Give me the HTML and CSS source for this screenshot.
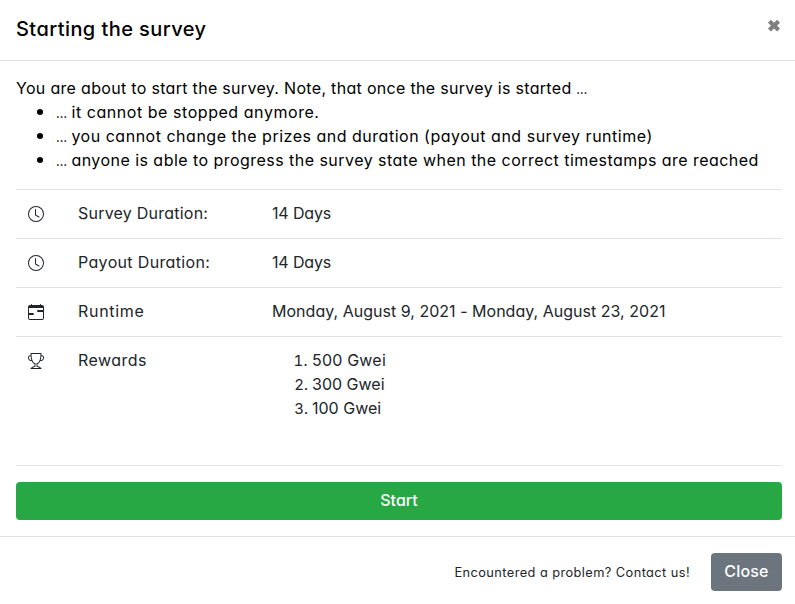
FILE: index.html
```html
<!DOCTYPE html>
<html lang="en">
<head>
<meta charset="utf-8">
<title>Starting the survey</title>
<link rel="stylesheet" href="styles.css">
</head>
<body>
<div class="modal">
  <header class="modal-header">
    <h1 class="modal-title">Starting the survey</h1>
    <button class="dismiss" aria-label="Dismiss"><svg width="14" height="14" viewBox="0 0 14 14"><path d="M2.4 2.2l9.2 8.8M11.6 2.2l-9.2 8.8"/></svg></button>
  </header>
  <main class="modal-body">
    <p class="intro">You are about to start the survey. Note, that once the survey is started <span class="dots">…</span></p>
    <ul class="notes">
      <li class="note-stop"><span class="dots">…</span> it cannot be stopped anymore.</li>
      <li class="note-change"><span class="dots">…</span> you cannot change the prizes and duration (payout and survey runtime)</li>
      <li class="note-progress"><span class="dots">…</span> anyone is able to progress the survey state when the correct timestamps are reached</li>
    </ul>
    <div class="details">
      <div class="row">
        <svg class="icon" viewBox="0 0 16 16"><path d="M8 3.5a.5.5 0 0 0-1 0V9a.5.5 0 0 0 .252.434l3.5 2a.5.5 0 0 0 .496-.868L8 8.71V3.5z"/><path d="M8 16A8 8 0 1 0 8 0a8 8 0 0 0 0 16zm7-8A7 7 0 1 1 1 8a7 7 0 0 1 14 0z"/></svg>
        <div class="label-survey">Survey Duration:</div>
        <div class="days">14 Days</div>
      </div>
      <div class="row">
        <svg class="icon" viewBox="0 0 16 16"><path d="M8 3.5a.5.5 0 0 0-1 0V9a.5.5 0 0 0 .252.434l3.5 2a.5.5 0 0 0 .496-.868L8 8.71V3.5z"/><path d="M8 16A8 8 0 1 0 8 0a8 8 0 0 0 0 16zm7-8A7 7 0 1 1 1 8a7 7 0 0 1 14 0z"/></svg>
        <div class="label-payout">Payout Duration:</div>
        <div class="days">14 Days</div>
      </div>
      <div class="row">
        <svg class="icon" viewBox="0 0 16 16"><path d="M9 7a1 1 0 0 1 1-1h5v2h-5a1 1 0 0 1-1-1zM1 9h4a1 1 0 0 1 0 2H1V9z"/><path d="M3.5 0a.5.5 0 0 1 .5.5V1h8V.5a.5.5 0 0 1 1 0V1h1a2 2 0 0 1 2 2v11a2 2 0 0 1-2 2H2a2 2 0 0 1-2-2V3a2 2 0 0 1 2-2h1V.5a.5.5 0 0 1 .5-.5zM1 4v10a1 1 0 0 0 1 1h12a1 1 0 0 0 1-1V4H1z"/></svg>
        <div class="label-runtime">Runtime</div>
        <div class="dates">Monday, August 9, 2021 - Monday, August 23, 2021</div>
      </div>
      <div class="row">
        <svg class="icon" viewBox="0 0 16 16"><path d="M2.5.5A.5.5 0 0 1 3 0h10a.5.5 0 0 1 .5.5c0 .538-.012 1.05-.034 1.536a3 3 0 1 1-1.133 5.89c-.79 1.865-1.878 2.777-2.833 3.011v2.173l1.425.356c.194.048.377.135.537.255L13.3 15.1a.5.5 0 0 1-.3.9H3a.5.5 0 0 1-.3-.9l1.838-1.379c.16-.12.343-.207.537-.255L6.5 13.11v-2.173c-.955-.234-2.043-1.146-2.833-3.012a3 3 0 1 1-1.132-5.89A33.076 33.076 0 0 1 2.5.5zm.099 2.54a2 2 0 0 0 .72 3.935c-.333-1.05-.588-2.346-.72-3.935zm10.083 3.935a2 2 0 0 0 .72-3.935c-.133 1.59-.388 2.885-.72 3.935zM3.504 1c.007.517.026 1.006.056 1.469.13 2.028.457 3.546.87 4.667C5.294 9.48 6.484 10 7 10a.5.5 0 0 1 .5.5v2.61a1 1 0 0 1-.757.97l-1.426.356a.5.5 0 0 0-.179.085L4.5 15h7l-.638-.479a.501.501 0 0 0-.18-.085l-1.425-.356a1 1 0 0 1-.757-.97V10.5A.5.5 0 0 1 9 10c.516 0 1.706-.52 2.57-2.864.413-1.12.74-2.64.87-4.667.03-.463.049-.952.056-1.469H3.504z"/></svg>
        <div class="label-rewards">Rewards</div>
        <ol class="rewards">
          <li class="first">500 Gwei</li>
          <li>300 Gwei</li>
          <li>100 Gwei</li>
        </ol>
      </div>
    </div>
    <hr class="divider">
    <button class="btn start">Start</button>
  </main>
  <footer class="modal-footer">
    <small class="contact">Encountered a problem? Contact us!</small>
    <button class="btn close">Close</button>
  </footer>
</div>
</body>
</html>
```
FILE: styles.css
```css
* { box-sizing: border-box; }
body {
  margin: 0;
  overflow: hidden;
  background: #fff;
  color: #000;
  font: 400 16px/24px Inter, "Open Sans", sans-serif;
  font-feature-settings: "cv11" 1, "calt" 0;
  white-space: nowrap;
}
button { font: inherit; font-feature-settings: inherit; border: 0; padding: 0; }
.modal { width: 798px; height: 604px; }
.modal-header {
  display: flex;
  justify-content: space-between;
  align-items: flex-start;
  height: 61px;
  padding: 14px 17px 0 16px;
  border-bottom: 1px solid #dee2e6;
}
.modal-title { margin: 0; font-size: 20px; line-height: 30px; font-weight: 500; letter-spacing: .43px; }
.dismiss { width: 14px; height: 14px; margin: 5px 0 0; background: none; }
.dismiss svg { display: block; }
.dismiss path { stroke: #808080; stroke-width: 4.2; fill: none; }
.modal-body { padding: 15px 16px 16px; }
.intro { margin: 0; letter-spacing: .31px; }
.dots { font-size: 11px; font-weight: 700; line-height: 1; letter-spacing: -.6px; }
.notes { margin: 0 0 17px; padding-left: 40px; }
.notes li::marker { font-size: 20px; }
.notes li { height: 24px; line-height: 22px; }
.note-stop { letter-spacing: .55px; }
.note-change { letter-spacing: .51px; }
.note-progress { letter-spacing: .46px; }
.details { color: #212529; margin-bottom: 16px; }
.row {
  display: grid;
  grid-template-columns: 50px 194px 1fr;
  padding: 11px 12px 13px;
  border-top: 1px solid #dee2e6;
}
.icon { width: 16px; height: 16px; margin-top: 5px; fill: currentColor; }
.label-survey { letter-spacing: .23px; }
.label-payout { letter-spacing: .34px; }
.label-runtime { letter-spacing: .7px; }
.label-rewards { letter-spacing: .46px; }
.days { letter-spacing: -.15px; }
.dates { letter-spacing: .02px; }
.rewards { margin: 0 0 16px; padding-left: 40px; }
.rewards li::marker { font-size: 15px; }
.rewards .first { letter-spacing: .2px; }
.divider { margin: 0 0 16px; border: 0; border-top: 1px solid #e5e5e5; }
.btn { display: block; height: 38px; padding-bottom: 2px; border-radius: 4px; color: #fff; font-weight: 500; }
.start { width: 100%; background: #28a745; }
.modal-footer {
  display: flex;
  justify-content: flex-end;
  align-items: center;
  gap: 21px;
  padding: 16px 16px 0;
  border-top: 1px solid #dee2e6;
}
.contact { padding-top: 2px; font-size: 12.8px; letter-spacing: .42px; color: #212529; }
.close { width: 71px; background: #6c757d; letter-spacing: .2px; }
```
